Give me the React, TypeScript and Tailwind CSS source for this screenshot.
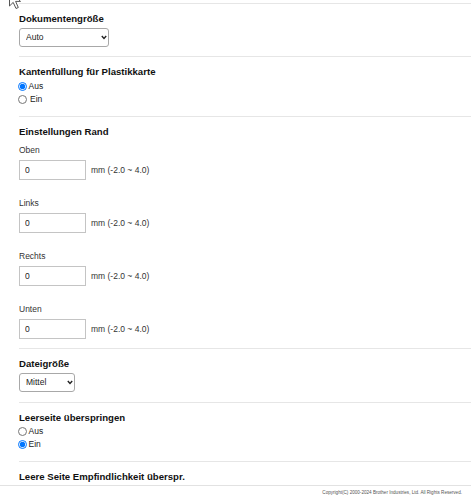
import { useState } from 'react';

const FONT = { fontFamily: '"Liberation Sans", Arial, sans-serif' };

function Separator() {
  return <div className="h-px bg-[#e6e6e6]" />;
}

function Heading({ children }: { children: React.ReactNode }) {
  return <h2 className="pt-[8px] text-[9.6px] leading-[13px] font-bold text-[#111]">{children}</h2>;
}

function RadioRow({
  name,
  label,
  checked,
  onChange,
  gap = 'ml-[1.5px]',
}: {
  name: string;
  label: string;
  checked: boolean;
  onChange: () => void;
  gap?: string;
}) {
  return (
    <label className="flex items-center h-[13px] text-[8.5px] text-[#222]">
      <input
        type="radio"
        name={name}
        checked={checked}
        onChange={onChange}
        className="ml-[-1.5px] w-[9.5px] h-[9.5px]"
      />
      <span className={gap}>{label}</span>
    </label>
  );
}

function Dropdown({ width, options, value }: { width: string; options: string[]; value: string }) {
  return (
    <div className={`relative mt-[3px] h-[19px] ${width}`}>
      <select
        defaultValue={value}
        className="block appearance-none w-full h-full border border-[#a8a8a8] rounded-[3px] bg-white pl-[6px] text-[8.5px] text-[#222] outline-none"
      >
        {options.map((o) => (
          <option key={o}>{o}</option>
        ))}
      </select>
      {/* chevron */}
      <svg className="pointer-events-none absolute right-[2px] top-[7px]" width="6" height="5" viewBox="0 0 6 5">
        <path d="M0.8 1 L3 3.4 L5.2 1" fill="none" stroke="#222" strokeWidth="1.4" />
      </svg>
    </div>
  );
}

function MarginField({ label, value, first }: { label: string; value: string; first?: boolean }) {
  return (
    <div className={first ? 'mt-[6px]' : 'mt-[17px]'}>
      <div className="text-[8.5px] leading-[12px] text-[#333]">{label}</div>
      <div className="mt-[4px] flex items-center">
        <input
          type="text"
          defaultValue={value}
          className="w-[67px] h-[20px] border border-[#c4c4c4] bg-white pl-[5px] text-[8.5px] text-[#222] outline-none"
        />
        <span className="ml-[5px] text-[8.5px] text-[#333]">mm (-2.0 ~ 4.0)</span>
      </div>
    </div>
  );
}

export default function App() {
  const [edgeFill, setEdgeFill] = useState('aus');
  const [skipBlank, setSkipBlank] = useState('ein');

  return (
    <div className="relative flex flex-col h-[500px] w-[471px] overflow-hidden bg-white" style={FONT}>
      {/* cursor from the screen capture */}
      <svg className="absolute left-[9px] top-[-10px]" width="13" height="20" viewBox="0 0 13 20">
        <path d="M0.5 0.5 L0.5 16 L4.2 12.4 L7 18.5 L9.3 17.5 L6.6 11.4 L11.5 11.4 Z" fill="#fff" stroke="#555" strokeWidth="1" />
      </svg>

      <div className="h-[485px] overflow-hidden pl-[19px]">
        <div className="h-[3px]" />

        {/* Dokumentengröße */}
        <Separator />
        <Heading>Dokumentengröße</Heading>
        <Dropdown width="w-[90px]" options={['Auto', 'A4', 'Letter']} value="Auto" />
        <div className="h-[9px]" />

        {/* Kantenfüllung */}
        <Separator />
        <Heading>Kantenfüllung für Plastikkarte</Heading>
        <div className="mt-[2px] mb-[10px]">
          <RadioRow name="edge" label="Aus" checked={edgeFill === 'aus'} onChange={() => setEdgeFill('aus')} />
          <RadioRow name="edge" label="Ein" gap="ml-[3px]" checked={edgeFill === 'ein'} onChange={() => setEdgeFill('ein')} />
        </div>

        {/* Einstellungen Rand */}
        <Separator />
        <Heading>Einstellungen Rand</Heading>
        <div className="mb-[9px]">
          <MarginField label="Oben" value="0" first />
          <MarginField label="Links" value="0" />
          <MarginField label="Rechts" value="0" />
          <MarginField label="Unten" value="0" />
        </div>

        {/* Dateigröße */}
        <Separator />
        <Heading>Dateigröße</Heading>
        <Dropdown width="w-[56px]" options={['Klein', 'Mittel', 'Groß']} value="Mittel" />
        <div className="h-[10px]" />

        {/* Leerseite überspringen */}
        <Separator />
        <Heading>Leerseite überspringen</Heading>
        <div className="mt-[1px] mb-[10px]">
          <RadioRow name="skip" label="Aus" checked={skipBlank === 'aus'} onChange={() => setSkipBlank('aus')} />
          <RadioRow name="skip" label="Ein" checked={skipBlank === 'ein'} onChange={() => setSkipBlank('ein')} />
        </div>

        <Separator />
        <Heading>Leere Seite Empfindlichkeit überspr.</Heading>
      </div>

      <footer className="flex items-center justify-end h-[15px] border-t border-[#e2e2e2] pr-[9px]">
        <p className="text-[4.6px] text-[#555]">Copyright(C) 2000-2024 Brother Industries, Ltd. All Rights Reserved.</p>
      </footer>
    </div>
  );
}
